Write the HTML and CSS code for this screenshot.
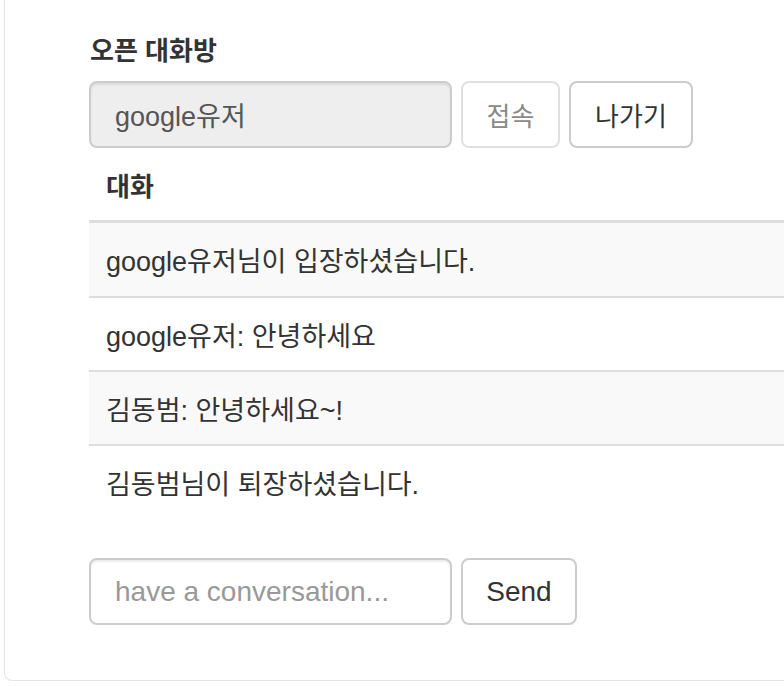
FILE: index.html
```html
<!DOCTYPE html>
<html lang="ko">
<head>
<meta charset="utf-8">
<title>오픈 대화방</title>
<link rel="stylesheet" href="styles.css">
</head>
<body>
<div class="card">
  <h4 class="title">오픈 대화방</h4>
  <div class="form-row">
    <input class="field field-name" type="text" value="google유저" disabled>
    <button class="btn btn-disabled" disabled>접속</button>
    <button class="btn btn-leave">나가기</button>
  </div>
  <table class="chat">
    <thead>
      <tr><th>대화</th></tr>
    </thead>
    <tbody>
      <tr><td>google유저님이 입장하셨습니다.</td></tr>
      <tr><td>google유저: 안녕하세요</td></tr>
      <tr><td>김동범: 안녕하세요~!</td></tr>
      <tr><td>김동범님이 퇴장하셨습니다.</td></tr>
    </tbody>
  </table>
  <div class="form-row send-row">
    <input class="field field-msg" type="text" placeholder="have a conversation...">
    <button class="btn btn-send">Send</button>
  </div>
</div>
</body>
</html>
```

FILE: styles.css
```css
html, body {
  margin: 0;
  padding: 0;
  overflow: hidden;
  background: #fff;
}

body {
  font-family: "Liberation Sans", "Noto Sans CJK KR", sans-serif;
  color: #333;
}

.card {
  margin: 0 0 0 4px;
  padding: 33px 0 55px 84px;
  border-style: solid;
  border-color: #e3e3e3;
  border-width: 0 0 1px 1px;
  border-bottom-left-radius: 8px;
  background: #fff;
}

.title {
  margin: 0 0 12px 1px;
  font-size: 26px;
  font-weight: 700;
  line-height: 36px;
  color: #333;
}

.form-row {
  display: flex;
  gap: 9px;
  align-items: stretch;
}

.field {
  box-sizing: border-box;
  width: 363px;
  height: 67px;
  padding: 0 24px;
  border: 2px solid #ccc;
  border-radius: 8px;
  font-family: "Liberation Sans", "Noto Sans CJK KR", sans-serif;
  font-size: 27px;
  color: #555;
  background: #fff;
  box-shadow: inset 0 2px 2px rgba(0, 0, 0, 0.075);
  outline: none;
}

.field-name {
  background: #eee;
  color: #555;
  -webkit-text-fill-color: #555;
  opacity: 1;
}

.field-msg {
  font-size: 28px;
}

.field::placeholder {
  color: #999;
}

.btn {
  box-sizing: border-box;
  height: 67px;
  padding: 0;
  border: 2px solid #ccc;
  border-radius: 8px;
  background: #fff;
  font-family: "Liberation Sans", "Noto Sans CJK KR", sans-serif;
  font-size: 26px;
  color: #333;
  white-space: nowrap;
  text-align: center;
}

.btn-disabled {
  width: 99px;
  border-color: #e0e0e0;
  color: #8a8a8a;
}

.btn-leave {
  width: 124px;
}

.btn-send {
  width: 116px;
  font-size: 28px;
}

.chat {
  width: 100%;
  border-collapse: collapse;
  border-spacing: 0;
}

.chat th {
  height: 72px;
  padding: 0 17px;
  text-align: left;
  font-size: 26px;
  font-weight: 700;
  border-bottom: 3px solid #ddd;
}

.chat td {
  height: 72px;
  padding: 0 17px;
  font-size: 27px;
  border-top: 2px solid #ddd;
}

.chat tbody tr:first-child td {
  border-top: none;
  height: 73px;
}

.chat tbody tr:nth-child(odd) td {
  background: #f9f9f9;
}

.send-row {
  margin-top: 40px;
}
```
